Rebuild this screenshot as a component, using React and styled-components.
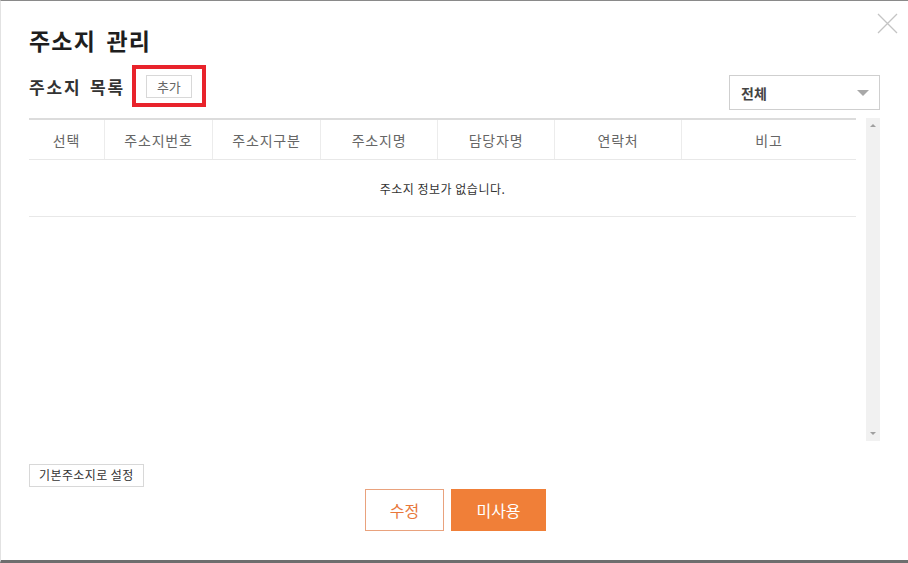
import styled, { createGlobalStyle } from 'styled-components';

const GlobalStyle = createGlobalStyle`
  html, body {
    margin: 0;
    padding: 0;
    background: #fff;
  }
  body {
    font-family: "Noto Sans CJK KR", "Noto Sans", sans-serif;
  }
  * {
    box-sizing: border-box;
  }
`;

const Modal = styled.div`
  position: relative;
  width: 908px;
  height: 563px;
  padding: 0 28px;
  background: #fff;
  border-top: 1px solid #8a8a8a;
  border-left: 1px solid #e2e2e2;
  border-bottom: 3px solid #6e6e6e;
  display: flex;
  flex-direction: column;
`;

const CloseButton = styled.button`
  position: absolute;
  top: 12px;
  right: 10px;
  width: 21px;
  height: 21px;
  padding: 0;
  border: 0;
  background: none;
  cursor: pointer;
`;

const Title = styled.h1`
  margin: 25px 0 0;
  height: 28px;
  line-height: 28px;
  font-size: 23px;
  font-weight: 700;
  letter-spacing: 1.2px;
  word-spacing: 4px;
  color: #1e1e1e;
`;

const ListHeader = styled.div`
  margin-top: 11px;
  height: 45px;
  display: flex;
  justify-content: space-between;
`;

const ListTitleGroup = styled.div`
  height: 42px;
  display: flex;
  align-items: center;
`;

const SubTitle = styled.h2`
  margin: 0;
  font-size: 17px;
  font-weight: 700;
  letter-spacing: 1.8px;
  word-spacing: 3px;
  color: #333;
`;

const Highlight = styled.div`
  margin-left: 7px;
  width: 74px;
  height: 42px;
  border: 4px solid #e8232b;
  display: flex;
  align-items: center;
  justify-content: center;
`;

const SmallButton = styled.button`
  height: ${p => p.$h || 23}px;
  padding: 0 ${p => p.$px || 10}px;
  border: 1px solid #d8d8d8;
  background: #fff;
  color: ${p => p.$color || '#666'};
  font-family: inherit;
  font-size: ${p => p.$size || 13}px;
  letter-spacing: ${p => p.$ls || 0}px;
  line-height: 1;
  cursor: pointer;
`;

const Select = styled.div`
  align-self: flex-end;
  width: 151px;
  height: 35px;
  border: 1px solid #cfcfcf;
  padding: 0 10px 0 11px;
  display: flex;
  align-items: center;
  justify-content: space-between;
  font-size: 14px;
  font-weight: 700;
  color: #444;
`;

const Caret = styled.span`
  width: 0;
  height: 0;
  border-left: 6px solid transparent;
  border-right: 6px solid transparent;
  border-top: 6px solid #a8a8a8;
`;

const TableArea = styled.div`
  margin-top: 8px;
  height: 323px;
  display: flex;
  gap: 10px;
`;

const Table = styled.div`
  width: 827px;
  display: flex;
  flex-direction: column;
`;

const HeadRow = styled.div`
  display: grid;
  grid-template-columns: 75px 108px 108px 117px 117px 127px 175px;
  height: 42px;
  border-top: 2px solid #dcdcdc;
  border-bottom: 1px solid #e8e8e8;
`;

const HeadCell = styled.div`
  display: flex;
  align-items: center;
  justify-content: center;
  font-size: 14px;
  letter-spacing: 0.8px;
  color: #666;
  border-left: ${p => (p.$first ? 'none' : '1px solid #ececec')};
`;

const EmptyRow = styled.div`
  height: 57px;
  border-bottom: 1px solid #e8e8e8;
  display: flex;
  align-items: center;
  justify-content: center;
  font-size: 12px;
  letter-spacing: 0.5px;
  color: #333;
`;

const Scrollbar = styled.div`
  width: 15px;
  background: #f1f1f1;
  display: flex;
  flex-direction: column;
  justify-content: space-between;
  align-items: center;
  padding: 6px 0;
`;

const ScrollArrow = styled.span`
  width: 0;
  height: 0;
  border-left: 3px solid transparent;
  border-right: 3px solid transparent;
  ${p =>
    p.$down ? 'border-top: 3px solid #a0a0a0;' : 'border-bottom: 3px solid #a0a0a0;'}
`;

const Footer = styled.div`
  margin-top: 20px;
`;

const ActionRow = styled.div`
  margin-top: 2px;
  display: flex;
  justify-content: center;
  gap: 7px;
  padding-left: 2px;
`;

const ActionButton = styled.button`
  width: ${p => p.$w}px;
  height: 42px;
  border: 1px solid ${p => (p.$primary ? '#f07f38' : '#e9a27d')};
  background: ${p => (p.$primary ? '#f07f38' : '#fff')};
  color: ${p => (p.$primary ? '#fff' : '#e8773a')};
  font-family: inherit;
  font-size: 16px;
  cursor: pointer;
`;

const columns = ['선택', '주소지번호', '주소지구분', '주소지명', '담당자명', '연락처', '비고'];

export default function App() {
  return (
    <>
      <GlobalStyle />
      <Modal>
        <CloseButton aria-label="닫기">
          <svg width="21" height="21" viewBox="0 0 21 21">
            <path d="M1 1 L20 20 M20 1 L1 20" stroke="#c4c4c4" strokeWidth="1.3" fill="none" />
          </svg>
        </CloseButton>

        <Title>주소지 관리</Title>

        <ListHeader>
          <ListTitleGroup>
            <SubTitle>주소지 목록</SubTitle>
            <Highlight>
              <SmallButton>추가</SmallButton>
            </Highlight>
          </ListTitleGroup>
          <Select>
            전체
            <Caret />
          </Select>
        </ListHeader>

        <TableArea>
          <Table>
            <HeadRow>
              {columns.map((c, i) => (
                <HeadCell key={c} $first={i === 0}>
                  {c}
                </HeadCell>
              ))}
            </HeadRow>
            <EmptyRow>주소지 정보가 없습니다.</EmptyRow>
          </Table>
          <Scrollbar>
            <ScrollArrow />
            <ScrollArrow $down />
          </Scrollbar>
        </TableArea>

        <Footer>
          <SmallButton $h={23} $px={9} $size={12} $ls={0.4} $color="#333">
            기본주소지로 설정
          </SmallButton>
        </Footer>

        <ActionRow>
          <ActionButton $w={79}>수정</ActionButton>
          <ActionButton $w={95} $primary>
            미사용
          </ActionButton>
        </ActionRow>
      </Modal>
    </>
  );
}
